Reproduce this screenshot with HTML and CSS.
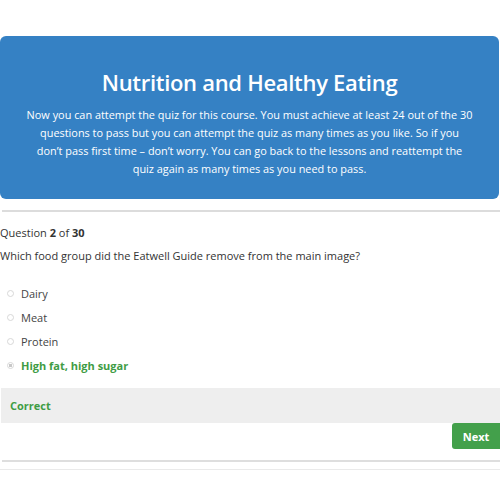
FILE: index.html
```html
<!DOCTYPE html>
<html>
<head>
<meta charset="utf-8">
<link rel="stylesheet" href="styles.css">
</head>
<body>
<div class="page">
  <section class="hero">
    <h1 class="hero-title">Nutrition and Healthy Eating</h1>
    <p class="hero-text">Now you can attempt the quiz for this course. You must achieve at least 24 out of the 30<br>questions to pass but you can attempt the quiz as many times as you like. So if you<br>don’t pass first time – don’t worry. You can go back to the lessons and reattempt the<br>quiz again as many times as you need to pass.</p>
  </section>
  <div class="rule"></div>
  <div class="quiz">
    <div class="q-count">Question <b>2</b> of <b>30</b></div>
    <div class="q-text">Which food group did the Eatwell Guide remove from the main image?</div>
    <ul class="options">
      <li class="option"><span class="radio"></span>Dairy</li>
      <li class="option"><span class="radio"></span>Meat</li>
      <li class="option"><span class="radio"></span>Protein</li>
      <li class="option correct"><span class="radio checked"></span>High fat, high sugar</li>
    </ul>
    <div class="feedback">Correct</div>
    <div class="actions"><button class="next">Next</button></div>
  </div>
  <div class="rule rule-bottom"></div>
  <div class="rule-thin"></div>
</div>
</body>
</html>
```
FILE: styles.css
```css
html, body {
  margin: 0;
  padding: 0;
  background: #fff;
}
body {
  font-family: "Open Sans", "Noto Sans", sans-serif;
  color: #333;
}
.page {
  padding-top: 36px;
}
.hero {
  background: #3581c4;
  color: #fff;
  border-radius: 6px;
  margin-right: 1px;
  height: 163px;
  box-sizing: border-box;
  padding: 30px 10px 0;
  text-align: center;
}
.hero-title {
  margin: 0;
  font-size: 22px;
  font-weight: 600;
  line-height: 32px;
  letter-spacing: -0.3px;
}
.hero-text {
  margin: 8px 0 0;
  font-size: 10.9px;
  line-height: 18px;
  white-space: nowrap;
}
.rule {
  height: 2px;
  background: #dcdcdc;
  margin: 11px 0 0 2px;
}
.q-count {
  font-size: 11px;
  line-height: 18px;
  margin-top: 12px;
  color: #333;
}
.q-count b { font-weight: 700; }
.q-text {
  font-size: 11px;
  line-height: 18px;
  margin-top: 5px;
  color: #333;
}
.options {
  list-style: none;
  margin: 16px 0 0;
  padding: 0;
}
.option {
  display: flex;
  align-items: center;
  height: 24px;
  font-size: 11px;
  color: #444;
  padding-left: 7px;
}
.radio {
  width: 7px;
  height: 7px;
  border: 1px solid #d8d8d8;
  border-radius: 50%;
  margin-right: 7px;
  box-sizing: border-box;
}
.radio.checked {
  background: radial-gradient(circle, #c8c8c8 45%, #fff 55%);
}
.option.correct {
  color: #3f9c45;
  font-weight: 700;
}
.feedback {
  margin-top: 11px;
  background: #eeeeee;
  height: 35px;
  line-height: 36px;
  padding-left: 9px;
  font-size: 11px;
  font-weight: 700;
  color: #3f9c45;
  margin-left: 1px;
}
.actions {
  display: flex;
  justify-content: flex-end;
}
.next {
  width: 48px;
  height: 26px;
  border: none;
  border-radius: 3px 0 0 3px;
  background: #43a04b;
  color: #fff;
  font-family: inherit;
  font-size: 11px;
  font-weight: 700;
  padding: 0;
}
.rule-bottom {
  margin-top: 11px;
  background: #dedede;
}
.rule-thin {
  height: 1px;
  background: #eaeaea;
  margin-top: 7px;
}
```
